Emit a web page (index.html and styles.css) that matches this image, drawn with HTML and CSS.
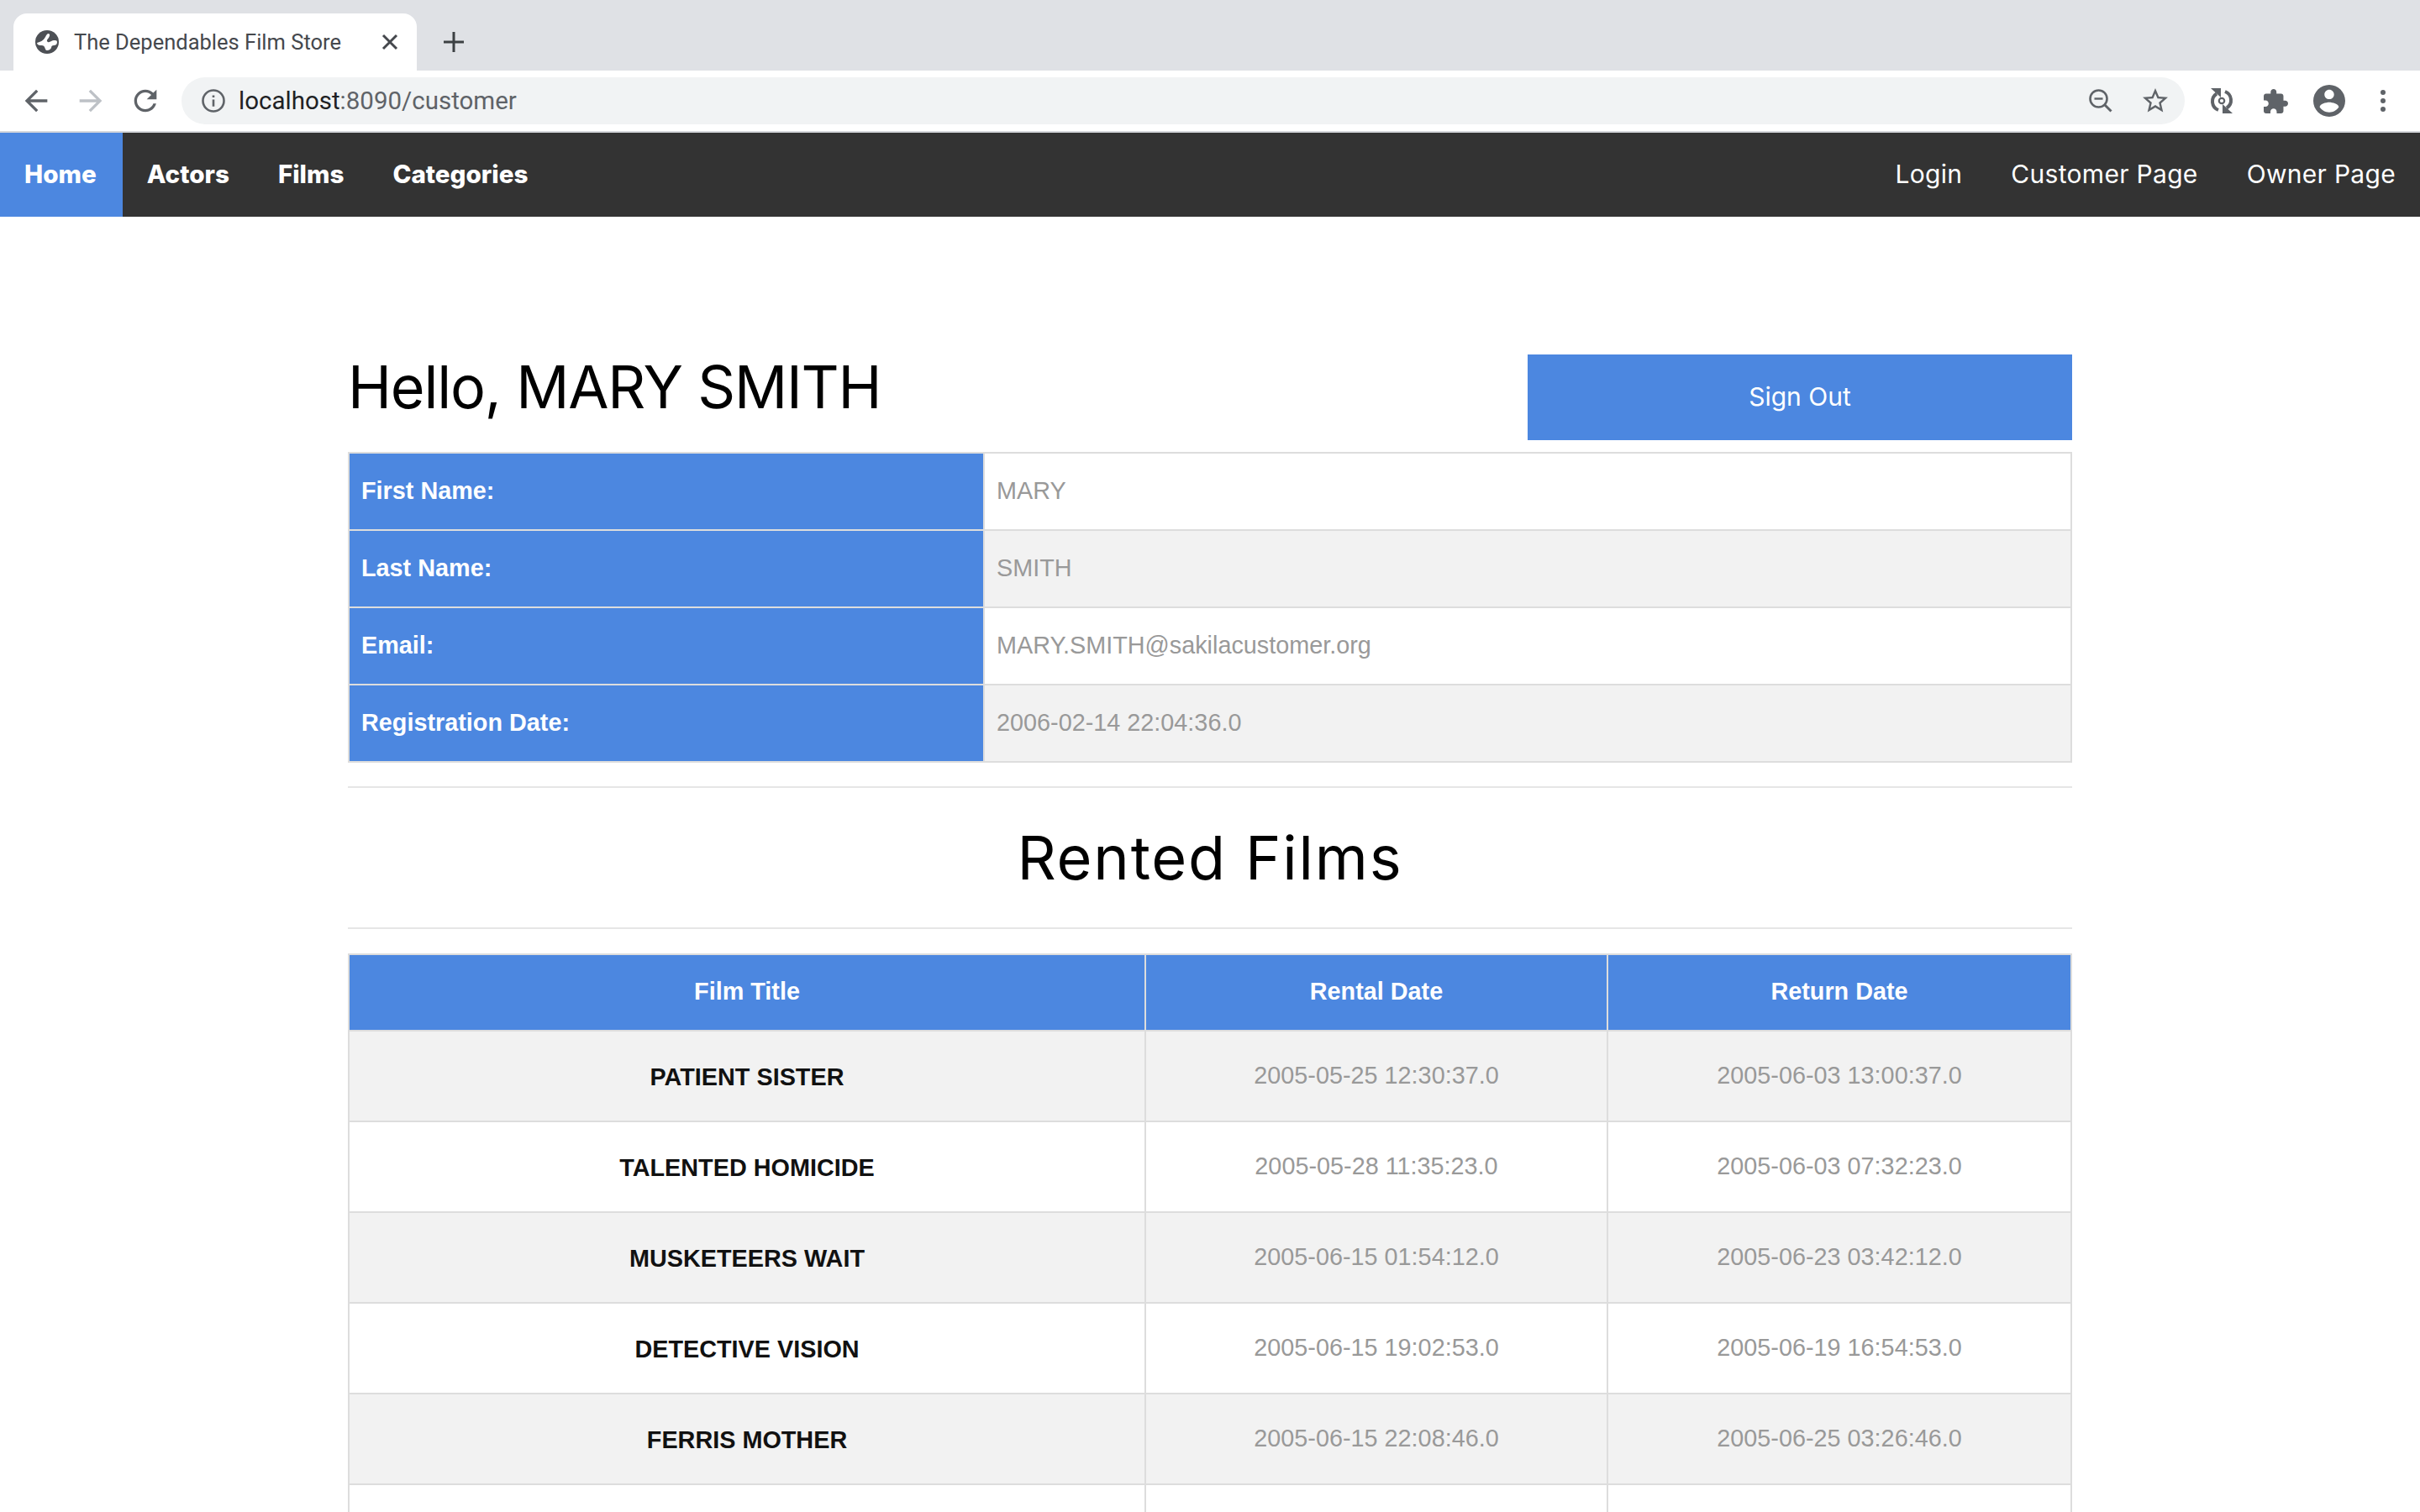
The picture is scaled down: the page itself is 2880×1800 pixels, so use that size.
FILE: index.html
```html
<!DOCTYPE html>
<html lang="en">
<head>
    <meta charset="UTF-8">
    <title>The Dependables Film Store</title>
    <link rel="stylesheet" href="styles.css">
</head>
<body>
    <div class="tabstrip">
        <div class="tab">
            <svg class="favicon" viewBox="0 0 28 28">
                <circle cx="14" cy="14" r="14" fill="#4d5055"/>
                <path d="M2 15C6 14 10 12 12 8c1-2 2-4 4-4 2 1 1 3 0 5-2 2-3 4-1 5 2 1 5-2 7-2 2 0 4 0 4 2 0 3-2 4-4 4-2 0-3 1-3 3-1 2-3 3-5 3-2 0-2-2-3-4-1-2-3-2-5-2-2 0-4-1-4-3z" fill="#fff"/>
            </svg>
            <span class="tab-title">The Dependables Film Store</span>
            <svg class="tab-close" viewBox="0 0 24 24"><path d="M4 4l16 16M20 4L4 20" stroke="#45484d" stroke-width="3" fill="none"/></svg>
        </div>
        <svg class="new-tab" viewBox="0 0 24 24"><path d="M12 0v24M0 12h24" stroke="#3c4043" stroke-width="3" fill="none"/></svg>
    </div>

    <div class="toolbar">
        <svg class="tool-icon" viewBox="0 0 24 24"><path fill="#5f6368" d="M20 11H7.83l5.59-5.59L12 4l-8 8 8 8 1.41-1.41L7.83 13H20v-2z"/></svg>
        <svg class="tool-icon" viewBox="0 0 24 24"><path fill="#bdc1c6" d="M4 11h12.17l-5.59-5.59L12 4l8 8-8 8-1.41-1.41L16.17 13H4v-2z"/></svg>
        <svg class="tool-icon" viewBox="0 0 24 24"><path fill="#5f6368" d="M17.65 6.35C16.2 4.9 14.21 4 12 4c-4.42 0-7.99 3.58-7.99 8s3.57 8 7.99 8c3.73 0 6.84-2.55 7.73-6h-2.08c-.82 2.33-3.04 4-5.65 4-3.31 0-6-2.69-6-6s2.69-6 6-6c1.66 0 3.14.69 4.22 1.78L13 11h7V4l-2.35 2.35z"/></svg>
        <div class="omnibox">
            <svg class="info-icon" viewBox="0 0 28 28">
                <circle cx="14" cy="14" r="12.5" stroke="#5f6368" stroke-width="2.6" fill="none"/>
                <path d="M12.7 12.5h2.6v8.2h-2.6zM12.7 7.5h2.6v2.6h-2.6z" fill="#5f6368"/>
            </svg>
            <span class="url"><span class="url-host">localhost</span>:8090/customer</span>
            <svg class="omni-zoom" viewBox="0 0 28 28">
                <circle cx="11.5" cy="11.5" r="10" stroke="#5f6368" stroke-width="2.6" fill="none"/>
                <path d="M6.5 10.3h10v2.4h-10z" fill="#5f6368"/>
                <path d="M18.5 18.5l8 8" stroke="#5f6368" stroke-width="3" fill="none"/>
            </svg>
            <svg class="omni-star" viewBox="0 0 24 24"><path fill="#5f6368" d="M22 9.24l-7.19-.62L12 2 9.19 8.63 2 9.24l5.46 4.73L5.82 21 12 17.27 18.18 21l-1.63-7.03L22 9.24zM12 15.4l-3.76 2.27 1-4.28-3.32-2.88 4.38-.38L12 6.1l1.71 4.04 4.38.38-3.32 2.88 1 4.28L12 15.4z"/></svg>
        </div>
        <div class="extensions">
            <svg class="ext-sync" viewBox="0 0 30 30">
                <path d="M9 6.5A11 11 0 0 0 11 26" stroke="#5f6368" stroke-width="4" fill="none"/>
                <path d="M21 23.5A11 11 0 0 0 19 4" stroke="#5f6368" stroke-width="4" fill="none"/>
                <path d="M2 0h12v11z" fill="#5f6368"/>
                <path d="M28 30H16V19z" fill="#5f6368"/>
                <circle cx="15" cy="15" r="3.2" stroke="#5f6368" stroke-width="2.2" fill="none"/>
            </svg>
            <svg class="ext-puzzle" viewBox="2 1 21 21"><path fill="#5f6368" d="M20.5 11H19V7c0-1.1-.9-2-2-2h-4V3.5C13 2.12 11.88 1 10.5 1S8 2.12 8 3.5V5H4c-1.1 0-1.99.9-1.99 2v3.8H3.5c1.49 0 2.7 1.21 2.7 2.7s-1.21 2.7-2.7 2.7H2V20c0 1.1.9 2 2 2h3.8v-1.5c0-1.49 1.21-2.7 2.7-2.7 1.49 0 2.7 1.21 2.7 2.7V22H17c1.1 0 2-.9 2-2v-4h1.5c1.38 0 2.5-1.12 2.5-2.5S21.88 11 20.5 11z"/></svg>
            <svg class="ext-account" viewBox="2 2 20 20"><path fill="#5f6368" d="M12 2C6.48 2 2 6.48 2 12s4.48 10 10 10 10-4.48 10-10S17.52 2 12 2zm0 3c1.66 0 3 1.34 3 3s-1.34 3-3 3-3-1.34-3-3 1.34-3 3-3zm0 14.2c-2.5 0-4.71-1.28-6-3.22.03-1.99 4-3.08 6-3.08 1.99 0 5.97 1.09 6 3.08-1.29 1.94-3.5 3.22-6 3.22z"/></svg>
            <svg class="ext-menu" viewBox="0 0 6 26">
                <circle cx="3" cy="3" r="3" fill="#5f6368"/>
                <circle cx="3" cy="13" r="3" fill="#5f6368"/>
                <circle cx="3" cy="23" r="3" fill="#5f6368"/>
            </svg>
        </div>
    </div>

    <nav class="navbar">
        <a class="nav-link nav-bold active" href="#">Home</a>
        <a class="nav-link nav-bold" href="#">Actors</a>
        <a class="nav-link nav-bold" href="#">Films</a>
        <a class="nav-link nav-bold" href="#">Categories</a>
        <div class="nav-right">
            <a class="nav-link" href="#">Login</a>
            <a class="nav-link" href="#">Customer Page</a>
            <a class="nav-link" href="#">Owner Page</a>
        </div>
    </nav>

    <main class="container">
        <div class="profile-head">
            <h1>Hello, MARY SMITH</h1>
            <a class="sign-out" href="#">Sign Out</a>
        </div>

        <table class="info-table">
            <colgroup><col class="info-label-col"><col></colgroup>
            <tbody>
                <tr><th>First Name:</th><td>MARY</td></tr>
                <tr><th>Last Name:</th><td>SMITH</td></tr>
                <tr><th>Email:</th><td>MARY.SMITH@sakilacustomer.org</td></tr>
                <tr><th>Registration Date:</th><td>2006-02-14 22:04:36.0</td></tr>
            </tbody>
        </table>

        <hr>
        <h2>Rented Films</h2>
        <hr class="hr-bottom">

        <table class="film-table">
            <colgroup><col class="film-col"><col class="date-col"><col></colgroup>
            <thead>
                <tr><th>Film Title</th><th>Rental Date</th><th>Return Date</th></tr>
            </thead>
            <tbody>
                <tr><td class="film-title">PATIENT SISTER</td><td>2005-05-25 12:30:37.0</td><td>2005-06-03 13:00:37.0</td></tr>
                <tr><td class="film-title">TALENTED HOMICIDE</td><td>2005-05-28 11:35:23.0</td><td>2005-06-03 07:32:23.0</td></tr>
                <tr><td class="film-title">MUSKETEERS WAIT</td><td>2005-06-15 01:54:12.0</td><td>2005-06-23 03:42:12.0</td></tr>
                <tr><td class="film-title">DETECTIVE VISION</td><td>2005-06-15 19:02:53.0</td><td>2005-06-19 16:54:53.0</td></tr>
                <tr><td class="film-title">FERRIS MOTHER</td><td>2005-06-15 22:08:46.0</td><td>2005-06-25 03:26:46.0</td></tr>
                <tr><td class="film-title"></td><td></td><td></td></tr>
            </tbody>
        </table>
    </main>
</body>
</html>
```

FILE: styles.css
```css
html, body {
    height: 1800px;
    overflow: hidden;
}
body {
    margin: 0;
    background: #fff;
    font-family: "Liberation Sans", Arial, sans-serif;
    font-size: 28.8px;
}

/* browser chrome */
.tabstrip {
    height: 84px;
    box-sizing: border-box;
    padding: 16px 0 0 16px;
    background: #dfe1e5;
    display: flex;
    align-items: flex-start;
}
.tab {
    width: 480px;
    height: 68px;
    box-sizing: border-box;
    padding: 0 20px 0 26px;
    background: #fff;
    border-radius: 16px 16px 0 0;
    display: flex;
    align-items: center;
}
.favicon {
    width: 28px;
    height: 28px;
    flex: none;
}
.tab-title {
    margin-left: 18px;
    font-family: Roboto, sans-serif;
    font-size: 25.5px;
    color: #45484d;
    white-space: nowrap;
    flex: 1;
}
.tab-close {
    width: 24px;
    height: 24px;
    flex: none;
}
.new-tab {
    width: 24px;
    height: 24px;
    margin: 22px 0 0 32px;
}
.toolbar {
    height: 72px;
    box-sizing: border-box;
    padding: 0 0 0 23px;
    display: flex;
    align-items: center;
    background: #fff;
}
.tool-icon {
    width: 40px;
    height: 40px;
    margin-right: 25px;
    flex: none;
}
.tool-icon:nth-child(3) {
    margin-right: 23px;
}
.omnibox {
    width: 2384px;
    height: 56px;
    box-sizing: border-box;
    padding: 0 17px 0 24px;
    background: #f1f3f4;
    border-radius: 28px;
    display: flex;
    align-items: center;
    flex: none;
}
.info-icon {
    width: 28px;
    height: 28px;
    flex: none;
}
.url {
    margin-left: 16px;
    font-family: Roboto, sans-serif;
    font-size: 29.5px;
    color: #5f6368;
    flex: 1;
}
.url-host {
    color: #202124;
}
.omni-zoom {
    width: 28px;
    height: 28px;
    margin-right: 33px;
    flex: none;
}
.omni-star {
    width: 36px;
    height: 36px;
    flex: none;
}
.extensions {
    flex: 1;
    display: flex;
    align-items: center;
    padding-left: 29px;
}
.ext-sync {
    width: 30px;
    height: 30px;
    margin-right: 35px;
}
.ext-puzzle {
    width: 29px;
    height: 29px;
    margin-right: 30px;
}
.ext-account {
    width: 38px;
    height: 38px;
    margin-right: 42px;
}
.ext-menu {
    width: 6px;
    height: 26px;
}

/* site nav */
.navbar {
    height: 102px;
    box-sizing: border-box;
    border-top: 2px solid #d5d7db;
    background: #333;
    display: flex;
}
.nav-link {
    padding: 0 29px 3px;
    display: flex;
    align-items: center;
    font-family: Inter, sans-serif;
    font-size: 30px;
    letter-spacing: 0.3px;
    color: #fff;
    text-decoration: none;
    white-space: nowrap;
}
.nav-bold {
    font-size: 29.6px;
    font-weight: 800;
    letter-spacing: 0;
}
.nav-link.active {
    padding-right: 31px;
    background: #4c87e0;
}
.nav-right {
    margin-left: auto;
    display: flex;
}

/* page content */
.container {
    width: 2052px;
    margin: 0 auto;
    padding-top: 164px;
}
.profile-head {
    height: 102px;
    margin-bottom: 14px;
    display: flex;
    justify-content: space-between;
    align-items: flex-start;
}
h1 {
    margin: 0;
    font-family: Inter, sans-serif;
    font-weight: 400;
    font-size: 70px;
    line-height: 78px;
    letter-spacing: -1.2px;
    color: #000;
}
.sign-out {
    width: 648px;
    height: 100px;
    padding-bottom: 2px;
    display: flex;
    align-items: center;
    justify-content: center;
    background: #4c87e0;
    color: #fff;
    font-family: Inter, sans-serif;
    font-size: 30px;
    text-decoration: none;
}
table {
    width: 100%;
    border-collapse: collapse;
    table-layout: fixed;
    border: 2px solid #ddd;
}
th, td {
    border: 2px solid #ddd;
    color: #999;
    font-weight: 400;
}
.info-label-col {
    width: 756px;
}
.info-table th, .info-table td {
    height: 92px;
    box-sizing: border-box;
    padding: 0 14px 2px;
    text-align: left;
}
.info-table th {
    background: #4c87e0;
    color: #fff;
    font-weight: 700;
}
.info-table tr:nth-child(even) td {
    background: #f2f2f2;
}
hr {
    height: 2px;
    margin: 28px 0 0;
    border: 0;
    background: #e6e6e6;
}
h2 {
    margin: 0;
    height: 164px;
    padding-bottom: 2px;
    display: flex;
    align-items: center;
    justify-content: center;
    font-family: Inter, sans-serif;
    font-weight: 400;
    font-size: 72px;
    letter-spacing: 1.8px;
    color: #000;
}
.hr-bottom {
    margin: 0 0 29px;
}
.film-col {
    width: 948px;
}
.date-col {
    width: 550px;
}
.film-table th, .film-table td {
    text-align: center;
    padding: 0;
}
.film-table th {
    height: 91px;
    box-sizing: border-box;
    padding-bottom: 2px;
    background: #4c87e0;
    color: #fff;
    font-weight: 700;
}
.film-table td {
    height: 108px;
    box-sizing: border-box;
    padding-bottom: 2px;
}
.film-table tbody tr:nth-child(odd) td {
    background: #f2f2f2;
}
.film-table td.film-title {
    padding: 2px 0 0;
    color: #111;
    font-weight: 700;
}
```
